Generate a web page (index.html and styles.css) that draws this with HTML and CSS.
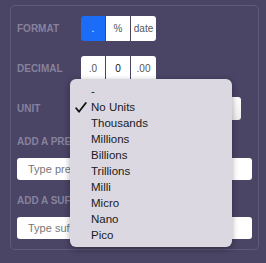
FILE: index.html
```html
<!DOCTYPE html>
<html>
<head>
<meta charset="utf-8">
<link rel="stylesheet" href="styles.css">
</head>
<body>
<div class="panel">
  <div class="row row-format">
    <div class="label">FORMAT</div>
    <div class="btn-group">
      <div class="btn active">.</div>
      <div class="btn">%</div>
      <div class="btn">date</div>
    </div>
  </div>
  <div class="row row-decimal">
    <div class="label">DECIMAL</div>
    <div class="btn-group">
      <div class="btn">.0</div>
      <div class="btn dark">0</div>
      <div class="btn">.00</div>
    </div>
  </div>
  <div class="row row-unit">
    <div class="label">UNIT</div>
    <div class="select"></div>
  </div>
  <div class="field field-prefix">
    <div class="label">ADD A PREFIX</div>
    <div class="input">Type prefix</div>
  </div>
  <div class="field field-suffix">
    <div class="label">ADD A SUFFIX</div>
    <div class="input">Type suffix</div>
  </div>
</div>
<div class="menu">
  <div class="item">-</div>
  <div class="item checked"><svg class="check" width="12" height="11" viewBox="0 0 12 11"><path d="M1.2 6.2 L4 9.8 L10.8 1" fill="none" stroke="#111" stroke-width="1.8" stroke-linecap="round" stroke-linejoin="round"/></svg>No Units</div>
  <div class="item">Thousands</div>
  <div class="item">Millions</div>
  <div class="item">Billions</div>
  <div class="item">Trillions</div>
  <div class="item">Milli</div>
  <div class="item">Micro</div>
  <div class="item">Nano</div>
  <div class="item">Pico</div>
</div>
</body>
</html>
```
FILE: styles.css
```css
html, body {
  margin: 0;
  padding: 0;
  background: #4a4465;
  font-family: "Liberation Sans", Arial, sans-serif;
  width: 266px;
  height: 263px;
  overflow: hidden;
}
.panel {
  margin: 5px 0 0 10px;
  width: 247px;
  height: 243px;
  border: 1px solid #5f5a7b;
  border-radius: 5px;
  box-sizing: content-box;
  padding: 0;
  display: flex;
  flex-direction: column;
}
.row {
  display: flex;
  align-items: center;
  padding-left: 6px;
}
.label {
  width: 64px;
  font-size: 10px;
  font-weight: bold;
  color: #86829d;
  white-space: nowrap;
  line-height: 12px;
}
.row-format { margin-top: 10px; }
.row-decimal { margin-top: 15px; }
.row-unit { margin-top: 16px; }
.btn-group {
  display: flex;
  gap: 1px;
}
.btn {
  width: 24px;
  height: 25px;
  background: #fff;
  color: #555;
  font-size: 10px;
  display: flex;
  align-items: center;
  justify-content: center;
}
.btn:first-child { border-radius: 3px 0 0 3px; }
.btn:last-child { border-radius: 0 3px 3px 0; width: 25px; }
.btn.active { background: #1b6cf6; color: #fff; }
.btn.dark { color: #111; }
.select {
  width: 160px;
  height: 23px;
  border-radius: 3px;
  background: linear-gradient(#ffffff, #ececec);
}
.field {
  padding-left: 6px;
  display: flex;
  flex-direction: column;
}
.field-prefix { margin-top: 16px; }
.field-suffix { margin-top: 15px; }
.field .label { width: auto; }
.input {
  margin-top: 10px;
  width: 235px;
  height: 22px;
  box-sizing: border-box;
  background: #fff;
  border-radius: 3px;
  font-size: 11px;
  color: #777;
  padding-left: 11px;
  display: flex;
  align-items: center;
}
.menu {
  position: absolute;
  left: 70px;
  top: 79px;
  width: 162px;
  height: 168px;
  box-sizing: border-box;
  padding-top: 4px;
  background: #dbd8e2;
  border-radius: 6px;
  box-shadow: 0 2px 6px rgba(0,0,0,0.35);
}
.item {
  position: relative;
  height: 16px;
  line-height: 16px;
  padding-left: 21px;
  font-size: 11.5px;
  color: #1a1a1a;
}
.check {
  position: absolute;
  left: 5px;
  top: 3px;
}
```
